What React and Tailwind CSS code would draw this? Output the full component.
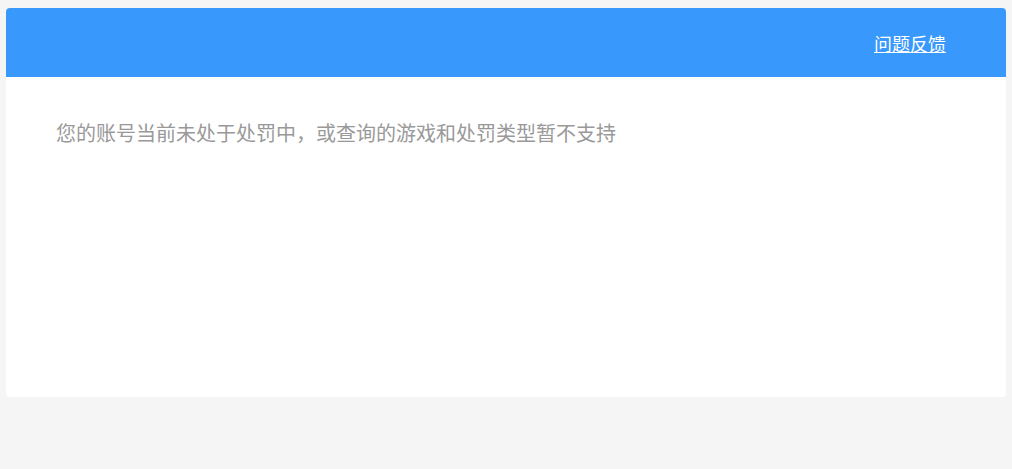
export default function App() {
  return (
    <div
      className="min-h-[469px] w-full bg-[#f5f5f5] pt-2 px-[6px]"
      style={{ fontFamily: '"Microsoft YaHei", "Noto Sans CJK SC", "Noto Sans", sans-serif' }}
    >
      <div className="w-[1000px] bg-white rounded-[4px] overflow-hidden">
        <div className="h-[69px] bg-[#3898fc] flex items-center justify-end pr-[60px]">
          <a href="#" className="text-white text-[18px] underline leading-none">问题反馈</a>
        </div>
        <div className="h-[320px] px-[50px] pt-[44px]">
          <p className="text-[#999999] text-[20px] leading-[24px]">您的账号当前未处于处罚中，或查询的游戏和处罚类型暂不支持</p>
        </div>
      </div>
    </div>
  );
}
